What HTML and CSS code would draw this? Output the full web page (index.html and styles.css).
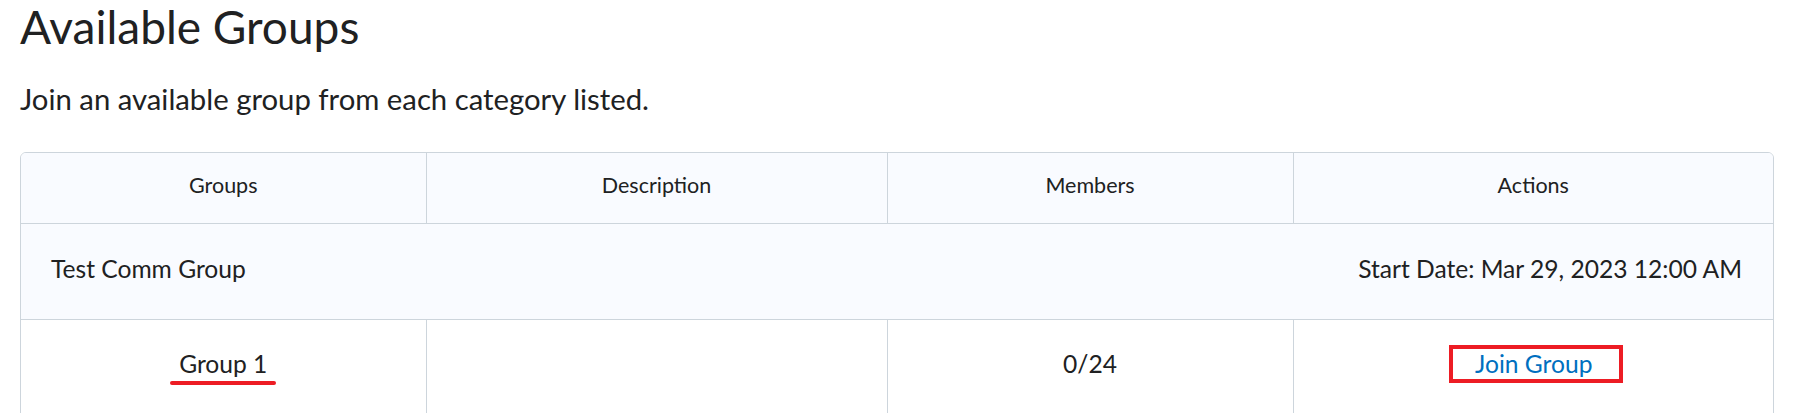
FILE: index.html
```html
<!DOCTYPE html>
<html lang="en">
<head>
<meta charset="utf-8">
<title>Available Groups</title>
<link rel="stylesheet" href="styles.css">
</head>
<body>
<main class="page">
  <h1 class="title">Available Groups</h1>
  <p class="intro">Join an available group from each category listed.</p>
  <div class="table-wrap">
    <table class="groups">
      <colgroup>
        <col class="c1"><col class="c2"><col class="c3"><col class="c4">
      </colgroup>
      <thead>
        <tr class="head-row">
          <th>Groups</th>
          <th>Description</th>
          <th>Members</th>
          <th>Actions</th>
        </tr>
      </thead>
      <tbody>
        <tr class="cat-row">
          <td colspan="4">
            <div class="cat">
              <span>Test Comm Group</span>
              <span>Start Date: Mar 29, 2023 12:00 AM</span>
            </div>
          </td>
        </tr>
        <tr class="group-row">
          <td><span class="marked">Group 1</span></td>
          <td></td>
          <td>0/24</td>
          <td><span class="boxed"><a href="#" class="join">Join Group</a></span></td>
        </tr>
      </tbody>
    </table>
  </div>
</main>
</body>
</html>
```
FILE: styles.css
```css
html, body {
  margin: 0;
  padding: 0;
  background: #ffffff;
}
body {
  font-family: Lato, "Noto Sans", sans-serif;
  color: #202122;
}
.page {
  padding: 0 23px 0 20px;
}
.title {
  margin: 0;
  font-size: 46px;
  font-weight: 400;
  line-height: 54px;
}
.intro {
  margin: 27px 0 0 0;
  font-size: 29.3px;
  line-height: 35px;
}
.table-wrap {
  margin-top: 36px;
  border: 1px solid #cdd5dc;
  border-radius: 6px;
  overflow: hidden;
}
.groups {
  width: 100%;
  border-collapse: collapse;
  table-layout: fixed;
}
.c1 { width: 405px; }
.c2 { width: 461px; }
.c3 { width: 406px; }
.groups th {
  height: 70px;
  box-sizing: border-box;
  padding: 0 0 5px 0;
  background: #f9fbff;
  font-size: 21.5px;
  font-weight: 400;
  text-align: center;
  vertical-align: middle;
  border-left: 1px solid #cdd5dc;
}
.groups th:first-child,
.groups td:first-child {
  border-left: none;
}
.cat-row td {
  height: 96px;
  box-sizing: border-box;
  padding: 0 31px 6px 30px;
  background: #f9fbff;
  border-top: 1px solid #cdd5dc;
  vertical-align: middle;
}
.cat {
  display: flex;
  justify-content: space-between;
  align-items: center;
  font-size: 24.6px;
}
.group-row td {
  height: 96px;
  padding: 25px 0 0 0;
  text-align: center;
  vertical-align: top;
  font-size: 24.6px;
  line-height: 38px;
  border-top: 1px solid #cdd5dc;
  border-left: 1px solid #cdd5dc;
}
.marked {
  position: relative;
  display: inline-block;
  vertical-align: top;
  margin-top: 4px;
  line-height: 30px;
}
.marked::after {
  content: "";
  position: absolute;
  left: -9px;
  right: -9px;
  bottom: -6px;
  height: 4px;
  border-radius: 2px;
  background: #ed1c24;
}
.boxed {
  display: inline-block;
  vertical-align: top;
  border: 4px solid #ed1c24;
  padding: 0 27px 0 22px;
  margin-left: 6px;
  line-height: 30px;
}
.join {
  color: #006fbf;
  text-decoration: none;
}
```
